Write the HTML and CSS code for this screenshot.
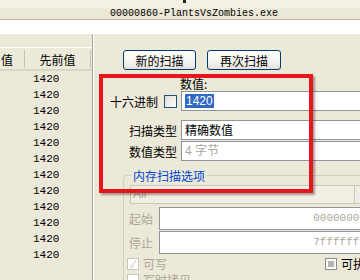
FILE: index.html
```html
<!DOCTYPE html>
<html lang="zh-CN">
    <head>
        <meta charset="UTF-8" />
        <meta name="viewport" content="width=device-width, initial-scale=1.0" />
        <title>Cheat Engine</title>
        <link rel="stylesheet" href="styles.css">
    </head>
    <body>
        <div class="window">
            <div class="titlebar">
                <span class="mark"></span>
                <span class="proc">00000860-PlantsVsZombies.exe</span>
            </div>
            <div class="progress"></div>

            <div class="main">
                <div class="results">
                    <div class="head">
                        <span class="col-a">值</span>
                        <span class="col-b">先前值</span>
                    </div>
                    <div class="row"><span class="col-a"></span><span class="col-b">1420</span></div>
                    <div class="row"><span class="col-a"></span><span class="col-b">1420</span></div>
                    <div class="row"><span class="col-a"></span><span class="col-b">1420</span></div>
                    <div class="row"><span class="col-a"></span><span class="col-b">1420</span></div>
                    <div class="row"><span class="col-a"></span><span class="col-b">1420</span></div>
                    <div class="row"><span class="col-a"></span><span class="col-b">1420</span></div>
                    <div class="row"><span class="col-a"></span><span class="col-b">1420</span></div>
                    <div class="row"><span class="col-a"></span><span class="col-b">1420</span></div>
                    <div class="row"><span class="col-a"></span><span class="col-b">1420</span></div>
                    <div class="row"><span class="col-a"></span><span class="col-b">1420</span></div>
                    <div class="row"><span class="col-a"></span><span class="col-b">1420</span></div>
                    <div class="row"><span class="col-a"></span><span class="col-b">1420</span></div>
                </div>

                <div class="panel">
                    <div class="scan-buttons">
                        <button class="btn btn-new">新的扫描</button>
                        <button class="btn btn-next">再次扫描</button>
                    </div>

                    <div class="value-caption">数值:</div>
                    <div class="field field-hex">
                        <span class="lbl">十六进制 <span class="check"></span></span>
                        <div class="edit"><span class="sel">1420</span></div>
                    </div>
                    <div class="field field-scan">
                        <span class="lbl">扫描类型</span>
                        <div class="edit">精确数值</div>
                    </div>
                    <div class="field field-type">
                        <span class="lbl">数值类型</span>
                        <div class="edit edit-off">4 字节</div>
                    </div>

                    <div class="group">
                        <span class="group-title">内存扫描选项</span>
                        <div class="combo">
                            <span class="combo-text">All</span>
                            <span class="combo-btn"></span>
                        </div>
                        <div class="range range-start">
                            <span class="range-lbl">起始</span>
                            <div class="range-edit">00000000</div>
                        </div>
                        <div class="range range-stop">
                            <span class="range-lbl">停止</span>
                            <div class="range-edit">7fffffff</div>
                        </div>
                        <div class="opts">
                            <span class="opt"><span class="box box-on">✓</span>可写</span>
                            <span class="opt opt-exec"><span class="box box-mid"></span>可执行</span>
                        </div>
                        <div class="opts opts-2">
                            <span class="opt"><span class="box"></span>写时拷贝</span>
                        </div>
                    </div>
                </div>
            </div>

            <!-- 红色标注框 -->
            <div class="highlight"></div>
        </div>
    </body>
</html>
```

FILE: styles.css
```css
* {
    box-sizing: border-box;
}

body {
    margin: 0;
    width: 360px;
    height: 280px;
    overflow: hidden;
    background: #ece9d8;
    font-family: "Noto Sans CJK SC", "Liberation Sans", sans-serif;
    font-size: 12px;
    color: #000;
}

.window {
    position: relative;
    width: 360px;
    height: 280px;
    overflow: hidden;
}

/* 顶部进程名 */
.titlebar {
    height: 20px;
    border-bottom: 1px solid #b9b6a5;
    background: linear-gradient(#f3f1e6 0, #f3f1e6 8px, #ebe8d6 9px, #ebe8d6 100%);
}

.mark {
    display: block;
    width: 3px;
    height: 3px;
    margin-left: 183px;
    background: #222;
}

.proc {
    display: block;
    margin-top: 6px;
    padding-left: 110px;
    font-family: "Liberation Mono", monospace;
    font-size: 10px;
    line-height: 10px;
    white-space: nowrap;
}

.progress {
    height: 14px;
    background: #fff;
}

.main {
    display: flex;
    height: 246px;
}

/* 左侧结果列表 */
.results {
    width: 93px;
    padding-top: 13px;
    border-right: 1px solid #a5a294;
    flex: none;
}

.head {
    display: flex;
    height: 24px;
    border-top: 1px solid #fff;
    border-bottom: 2px solid #d9d5c4;
    background: #ebeadb;
}

.head span {
    line-height: 20px;
    border-right: 1px solid #c5c2b2;
    margin: 2px 0 0;
    height: 18px;
}

.col-a {
    width: 25px;
    flex: none;
    padding-left: 1px;
}

.col-b {
    width: 66px;
    flex: none;
}

.head .col-b {
    text-align: center;
}

.row {
    display: flex;
    height: 16px;
    line-height: 16px;
    font-family: "Liberation Mono", monospace;
    font-size: 11px;
}

.row .col-b {
    padding-left: 8px;
}

/* 右侧面板 */
.panel {
    flex: 1;
    border-left: 1px solid #fff;
    padding-top: 16px;
}

.scan-buttons {
    display: flex;
    gap: 11px;
    padding-left: 29px;
}

.btn {
    height: 20px;
    padding: 0;
    border: 1px solid #003c74;
    border-radius: 3px;
    background: linear-gradient(#fff, #f4f3ee 60%, #e3e1d6);
    font-family: "Noto Sans CJK SC", sans-serif;
    font-size: 12px;
    line-height: 17px;
    color: #000;
}

.btn-new {
    width: 73px;
}

.btn-next {
    width: 74px;
}

.value-caption {
    margin: 7px 0 0 86px;
    height: 14px;
    line-height: 14px;
}

.field {
    display: flex;
    align-items: center;
    gap: 4px;
}

.lbl {
    width: 83px;
    flex: none;
    display: flex;
    align-items: center;
    justify-content: flex-end;
    gap: 6px;
}

.check {
    width: 13px;
    height: 13px;
    border: 1px solid #1c5180;
    background: linear-gradient(135deg, #dcdcd7, #fff);
}

.edit {
    width: 200px;
    height: 20px;
    border: 1px solid #8f9496;
    border-right: 0;
    background: #fff;
    padding-left: 3px;
    line-height: 18px;
}

.sel {
    display: inline-block;
    margin-top: 2px;
    padding: 0 1px;
    height: 14px;
    line-height: 14px;
    background: #316ac5;
    color: #fff;
    font-family: "Liberation Sans", sans-serif;
    font-size: 12px;
    vertical-align: top;
}

.field-scan {
    margin-top: 9px;
}

.field-type {
    margin-top: 1px;
}

.edit-off {
    color: #a9a7a0;
    font-family: "Liberation Sans", "Noto Sans CJK SC", sans-serif;
}

/* 内存扫描选项 */
.group {
    margin: 14px 0 0 29px;
    width: 260px;
    height: 120px;
    border: 1px solid #d0d0bf;
    border-radius: 4px;
    padding-left: 5px;
}

.group-title {
    display: table;
    margin: -7px 0 0 2px;
    padding: 0 2px;
    height: 13px;
    line-height: 13px;
    background: #ece9d8;
    color: #0046d5;
}

.combo {
    display: flex;
    width: 242px;
    height: 19px;
    margin: 3px 0 0 1px;
    border: 1px solid #c9c7ba;
    background: #f1efe2;
}

.combo-text {
    flex: 1;
    padding-left: 2px;
    line-height: 16px;
    font-family: "Liberation Sans", sans-serif;
    color: #aca899;
}

.combo-btn {
    width: 17px;
    border-left: 1px solid #c9c7ba;
    background: #eeede5;
}

.range {
    display: flex;
    align-items: center;
}

.range-start {
    margin-top: 3px;
}

.range-stop {
    margin-top: 1px;
}

.range-lbl {
    width: 30px;
    flex: none;
    color: #aca899;
}

.range-edit {
    width: 212px;
    height: 23px;
    border: 1px solid #8f9496;
    background: #fff;
    text-align: right;
    padding-right: 4px;
    line-height: 21px;
    font-family: "Liberation Mono", monospace;
    font-size: 11px;
    color: #aca899;
}

.opts {
    display: flex;
    margin: 4px 0 0 -2px;
    height: 12px;
    line-height: 12px;
    color: #aca899;
}

.opts-2 {
    margin-top: 4px;
}

.opt {
    display: flex;
    align-items: center;
    gap: 4px;
}

.opt-exec {
    margin-left: 158px;
    color: #000;
}

.box {
    width: 12px;
    height: 12px;
    border: 1px solid #c9c7ba;
    background: #fff;
    font-size: 10px;
    line-height: 10px;
    text-align: center;
    color: #c9c7ba;
}

.box-mid {
    border-color: #8f8f8f;
    padding: 2px;
}

.box-mid::before {
    content: "";
    display: block;
    width: 6px;
    height: 6px;
    background: #b4b4ac;
}

.highlight {
    position: absolute;
    left: 99px;
    top: 74px;
    width: 214px;
    height: 119px;
    border: 4px solid #e8161c;
    box-shadow: 2px 2px 2px rgba(0, 0, 0, 0.35);
}
```
